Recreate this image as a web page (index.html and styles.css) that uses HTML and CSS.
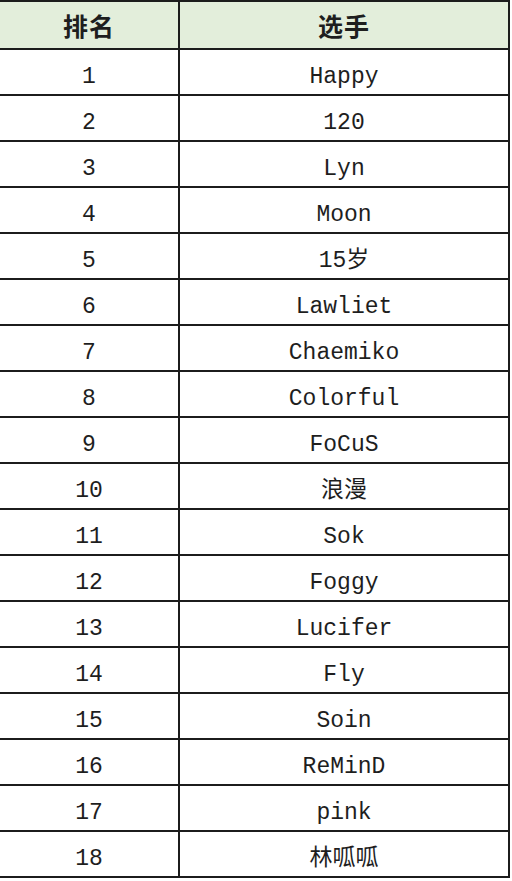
FILE: index.html
```html
<!DOCTYPE html>
<html lang="zh-CN">
<head>
<meta charset="utf-8">
<link rel="stylesheet" href="styles.css">
</head>
<body>
<table class="rank">
  <colgroup><col class="c1"><col class="c2"></colgroup>
  <thead>
    <tr><th>排名</th><th>选手</th></tr>
  </thead>
  <tbody>
    <tr><td>1</td><td>Happy</td></tr>
    <tr><td>2</td><td>120</td></tr>
    <tr><td>3</td><td>Lyn</td></tr>
    <tr><td>4</td><td>Moon</td></tr>
    <tr><td>5</td><td>15岁</td></tr>
    <tr><td>6</td><td>Lawliet</td></tr>
    <tr><td>7</td><td>Chaemiko</td></tr>
    <tr><td>8</td><td>Colorful</td></tr>
    <tr><td>9</td><td>FoCuS</td></tr>
    <tr><td>10</td><td>浪漫</td></tr>
    <tr><td>11</td><td>Sok</td></tr>
    <tr><td>12</td><td>Foggy</td></tr>
    <tr><td>13</td><td>Lucifer</td></tr>
    <tr><td>14</td><td>Fly</td></tr>
    <tr><td>15</td><td>Soin</td></tr>
    <tr><td>16</td><td>ReMinD</td></tr>
    <tr><td>17</td><td>pink</td></tr>
    <tr><td>18</td><td>林呱呱</td></tr>
  </tbody>
</table>
</body>
</html>
```
FILE: styles.css
```css
html, body {
  margin: 0;
  padding: 0;
  background: #ffffff;
}
body {
  overflow: hidden;
}
.rank {
  border-collapse: collapse;
  table-layout: fixed;
  width: 510px;
  margin: 0 0 0 -2px;
  border: 2px solid #1c1c1c;
  color: #1e1e1e;
}
.rank .c1 { width: 180px; }
.rank .c2 { width: 330px; }
.rank th,
.rank td {
  border: 2px solid #1c1c1c;
  text-align: center;
  padding: 0;
}
.rank th {
  height: 46px;
  background: #e3eedb;
  font-family: "Noto Sans CJK SC", "Noto Sans", sans-serif;
  font-weight: 700;
  font-size: 25px;
  letter-spacing: 1px;
  line-height: 46px;
}
.rank td {
  height: 46px;
  font-family: "Liberation Mono", "Noto Sans CJK SC", monospace;
  font-size: 23px;
  line-height: 24px;
  padding-top: 9px;
  box-sizing: border-box;
  vertical-align: middle;
}
```
